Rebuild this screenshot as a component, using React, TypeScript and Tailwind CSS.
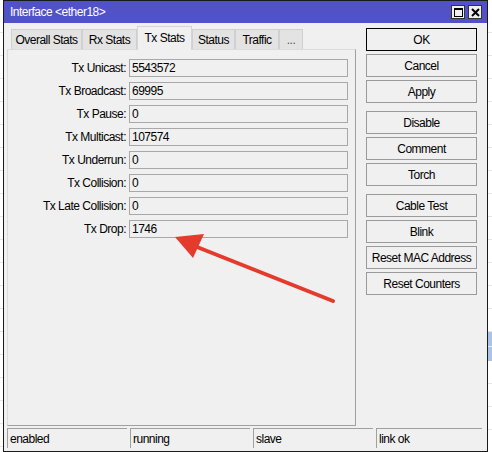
import React from "react";

const font = { fontFamily: '"Liberation Sans", Arial, sans-serif' };

const tabs = ["Overall Stats", "Rx Stats", "Tx Stats", "Status", "Traffic", "..."];
const tabWidths = ["w-[71px]", "w-[55px]", "w-[55px]", "w-[43px]", "w-[44px]", "w-[24px]"];

const stats: [string, string][] = [
  ["Tx Unicast:", "5543572"],
  ["Tx Broadcast:", "69995"],
  ["Tx Pause:", "0"],
  ["Tx Multicast:", "107574"],
  ["Tx Underrun:", "0"],
  ["Tx Collision:", "0"],
  ["Tx Late Collision:", "0"],
  ["Tx Drop:", "1746"],
];

const buttonGroups = [
  ["OK", "Cancel", "Apply"],
  ["Disable", "Comment", "Torch"],
  ["Cable Test", "Blink", "Reset MAC Address", "Reset Counters"],
];

const statusCells = [
  ["enabled", "w-[120px]"],
  ["running", "w-[120px]"],
  ["slave", "w-[120px]"],
  ["link ok", "w-[106px]"],
];

// faint rows of the list behind the dialog
function BgStrip({ className, blue }: { className: string; blue?: boolean }) {
  return (
    <div className={`flex flex-col shrink-0 bg-white ${className}`}>
      {Array.from({ length: 14 }).map((_, i) => (
        <div key={i} className="h-[23px] shrink-0 border-b border-[#e6e6e6]" />
      ))}
      {blue && (
        <div className="h-[29px] shrink-0 flex flex-col">
          <div className="h-[14px] bg-[#a9c4e8]" />
          <div className="h-px bg-[#e4ecf7]" />
          <div className="h-[14px] bg-[#a9c4e8]" />
        </div>
      )}
      {Array.from({ length: 6 }).map((_, i) => (
        <div key={"b" + i} className="h-[23px] shrink-0 border-b border-[#e6e6e6]" />
      ))}
    </div>
  );
}

function WinButton({ label }: { label: string }) {
  return (
    <div
      className={`h-[23px] flex items-center justify-center bg-[#f0f0f0] text-[12px] text-black border ${
        label === "OK" ? "border-black" : "border-[#9a9a9a]"
      }`}
    >
      {label}
    </div>
  );
}

export default function App() {
  return (
    <div className="relative w-[492px] h-[452px] bg-white flex overflow-hidden tracking-[-0.5px]" style={font}>
      <BgStrip className="w-[3px] pt-[10px]" />

      <div className="w-[485px] h-[452px] flex flex-col border border-[#1a1a1a] shrink-0">
        <div className="h-[22px] shrink-0 bg-[#5252c8] flex items-center pl-[6px] pr-[5px]">
          <span className="text-white text-[12px]">Interface &lt;ether18&gt;</span>
          <div className="ml-auto flex gap-[3px]">
            <div className="w-[14px] h-[14px] bg-[#f0f0f0] border border-[#333] flex items-center justify-center">
              <div className="w-[9px] h-[9px] border border-black border-t-2" />
            </div>
            <div className="w-[14px] h-[14px] bg-[#f0f0f0] border border-[#333] flex items-center justify-center">
              <svg width="9" height="9" viewBox="0 0 9 9">
                <path d="M1 1 L8 8 M8 1 L1 8" stroke="#000" strokeWidth="2" />
              </svg>
            </div>
          </div>
        </div>

        <div className="flex-1 bg-[#f0f0f0] flex flex-col pl-[3px] pr-[4px]">
          <div className="flex flex-1">
            <div className="w-[349px] flex flex-col pt-[2px]">
              <div className="flex items-end h-[24px] pl-[4px]">
                {tabs.map((t, i) =>
                  t === "Tx Stats" ? (
                    <div
                      key={t}
                      className={`${tabWidths[i]} h-[24px] -mb-px bg-[#f0f0f0] border border-b-0 border-[#d4d4d4] flex items-center justify-center text-[12px] pb-[2px] relative z-10`}
                    >
                      {t}
                    </div>
                  ) : (
                    <div
                      key={t}
                      className={`${tabWidths[i]} h-[20px] bg-[#e3e3e3] border border-b-0 border-[#d0d0d0] flex items-center justify-center text-[12px] ${
                        t === "..." ? "text-[#555]" : "text-black"
                      }`}
                    >
                      {t}
                    </div>
                  )
                )}
              </div>
              <div className="h-[377px] border border-t-[#dcdcdc] border-l-[#dcdcdc] border-r-[#a0a0a0] border-b-[#a0a0a0] pt-[9px] pr-[7px] flex flex-col gap-[5px]">
                {stats.map(([label, value]) => (
                  <div key={label} className="flex items-center h-[18px]">
                    <div className="w-[121px] text-right pr-[3px] text-[12px] text-black">{label}</div>
                    <div className="flex-1 h-[18px] border border-[#a8a8a8] bg-[#f0f0f0] pl-[2px] flex items-center text-[12px] text-black">
                      {value}
                    </div>
                  </div>
                ))}
              </div>
            </div>

            <div className="ml-[10px] w-[111px] pt-[5px] flex flex-col gap-[8px]">
              {buttonGroups.map((g, gi) => (
                <div key={gi} className="flex flex-col gap-[3px]">
                  {g.map((b) => (
                    <WinButton key={b} label={b} />
                  ))}
                </div>
              ))}
            </div>
          </div>

          <div className="h-[25px] flex gap-[3px] pt-[2px] pb-[3px]">
            {statusCells.map(([label, w]) => (
              <div
                key={label}
                className={`${w} h-[20px] border-t border-l border-[#a0a0a0] flex items-center pl-[2px] text-[12px] text-black`}
              >
                {label}
              </div>
            ))}
          </div>
        </div>
      </div>

      <BgStrip className="w-[4px] pt-[10px]" blue />

      <svg className="absolute left-0 top-0 pointer-events-none" width="492" height="452" viewBox="0 0 492 452">
        <line x1="333" y1="301" x2="192" y2="245" stroke="#e53b2d" strokeWidth="4" strokeLinecap="round" />
        <polygon points="175,237 204,234 193,258" fill="#e53b2d" />
      </svg>
    </div>
  );
}
